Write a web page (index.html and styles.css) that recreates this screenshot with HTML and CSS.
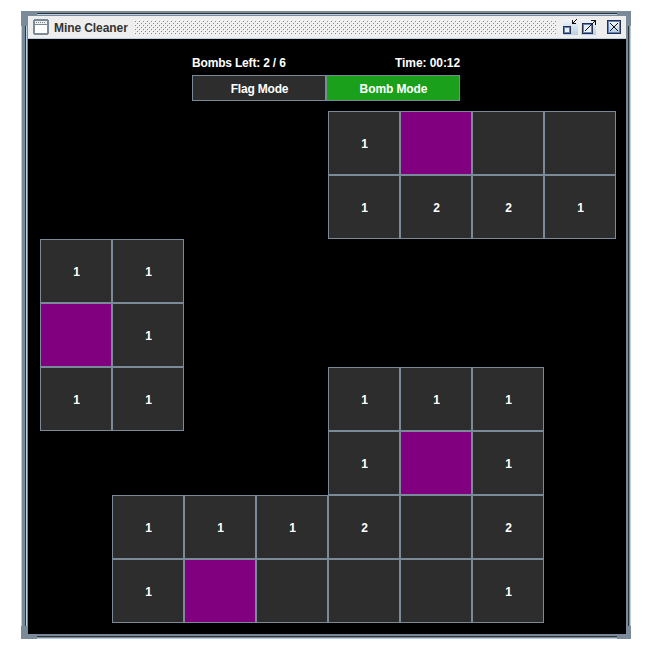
FILE: index.html
```
<!DOCTYPE html>
<html lang="en">
<head>
<meta charset="utf-8">
<title>Mine Cleaner</title>
<link rel="stylesheet" href="styles.css">
</head>
<body>
<div class="window">
  <i class="edge edge-left"></i><i class="edge edge-right"></i><i class="edge edge-bottom"></i>
  <i class="groove top"></i><i class="groove bottom"></i><i class="groove left"></i><i class="groove right"></i>
  <header class="titlebar">
    <svg class="app-icon" width="16" height="16" shape-rendering="crispEdges"><path fill="#7a8a99" d="M1 0h14v1h1v14h-1v1H1v-1H0V1h1z"/><path fill="#fff" d="M2 6h12v8H2z"/><path fill="#eee" d="M2 2h12v3H2z"/><path fill="#7a8a99" d="M3 3h1v1H3zM5 3h1v1H5zM7 3h1v1H7zM9 3h1v1H9zM11 3h1v1h-1z"/></svg>
    <span class="title">Mine Cleaner</span>
    <svg class="bumps" width="422" height="15" shape-rendering="crispEdges"><defs><pattern id="bump" width="4" height="4" patternUnits="userSpaceOnUse"><path fill="#fff" d="M0 0h1v1H0zM2 2h1v1H2z"/><path fill="#7a8a99" d="M1 1h1v1H1zM3 3h1v1H3z"/></pattern></defs><rect width="422" height="15" fill="url(#bump)"/></svg>
    <svg class="buttons" width="60" height="16" shape-rendering="crispEdges">
      <defs><linearGradient id="face" x2="0" y2="1"><stop stop-color="#f2f6fa"/><stop offset="1" stop-color="#b8cfe5"/></linearGradient></defs>
      <path fill="url(#face)" d="M0 0h15v16H0zM18 0h15v16H18z"/>
      <path fill="#26324a" d="M0 7h8v8H0z"/><path fill="#6382bf" d="M1 8h6v6H1z"/><path fill="#e8f0f8" d="M2 9h4v4H2z"/>
      <path fill="#111" d="M9 1h1v3h3v1H9zM10 3h1v1h-1zM11 2h1v1h-1zM12 1h1v1h-1zM13 0h1v1h-1z"/>
      <path fill="#26324a" d="M19 4h11v11H19z"/><path fill="#6382bf" d="M20 5h9v9H20z"/><path fill="#e8f0f8" d="M21 6h7v7h-7z"/>
      <path fill="#111" d="M22 11h1v1h-1zM23 10h1v1h-1zM24 9h1v1h-1zM25 8h1v1h-1zM26 7h1v1h-1zM27 6h1v1h-1zM28 5h1v1h-1zM29 4h1v1h-1zM30 3h1v1h-1zM31 2h1v1h-1zM28 1h5v5h-1V2h-4z"/>
      <path fill="#26324a" d="M44 1h14v14H44z"/><path fill="#6382bf" d="M45 2h12v12H45z"/><path fill="url(#face)" d="M46 3h10v10H46z"/>
      <path stroke="#111" d="M47 4l8 8M55 4l-8 8" stroke-width="1.300"/>
    </svg>
  </header>
  <main class="content">
    <div class="panel">
      <div class="status"><span class="bombs">Bombs Left: 2 / 6</span><span class="time">Time: 00:12</span></div>
      <div class="modes"><button>Flag Mode</button><button class="active">Bomb Mode</button></div>
    </div>
    <div class="board">
      <b></b><b></b><b></b><b></b><b class="cell">1</b><b class="cell mine"></b><b class="cell"></b><b class="cell"></b>
      <b></b><b></b><b></b><b></b><b class="cell">1</b><b class="cell">2</b><b class="cell">2</b><b class="cell">1</b>
      <b class="cell">1</b><b class="cell">1</b><b></b><b></b><b></b><b></b><b></b><b></b>
      <b class="cell mine"></b><b class="cell">1</b><b></b><b></b><b></b><b></b><b></b><b></b>
      <b class="cell">1</b><b class="cell">1</b><b></b><b></b><b class="cell">1</b><b class="cell">1</b><b class="cell">1</b><b></b>
      <b></b><b></b><b></b><b></b><b class="cell">1</b><b class="cell mine"></b><b class="cell">1</b><b></b>
      <b></b><b class="cell">1</b><b class="cell">1</b><b class="cell">1</b><b class="cell">2</b><b class="cell"></b><b class="cell">2</b><b></b>
      <b></b><b class="cell">1</b><b class="cell mine"></b><b class="cell"></b><b class="cell"></b><b class="cell"></b><b class="cell">1</b><b></b>
    </div>
  </main>
</div>
</body>
</html>
```
FILE: styles.css
```
* { box-sizing: border-box; }
body { margin: 0; padding: 11px 0 0 21px; background: #fff; font: bold 12px/16px "Liberation Sans", Arial, sans-serif; }
.window { position: relative; width: 610px; height: 628px; padding: 5px 5px 5px 7px; background: #7a8a99; }
.edge { position: absolute; background: #b8cfe5; }
.edge-left, .edge-right { top: 15px; bottom: 13px; width: 1px; }
.edge-left { left: 0; }
.edge-right { right: 0; }
.edge-bottom { left: 16px; right: 14px; bottom: 0; height: 1px; }
.groove { position: absolute; background: #333; }
.top, .bottom { left: 16px; right: 14px; height: 1px; }
.top { top: 2px; box-shadow: 0 1px #b8cfe5; }
.bottom { bottom: 2px; }
.left, .right { top: 15px; bottom: 13px; width: 1px; }
.left { left: 4px; box-shadow: 1px 0 #b8cfe5; }
.right { right: 2px; }
.titlebar { display: flex; align-items: center; height: 23px; padding: 0 3px 0 5px; background: #eee; border-bottom: 1px solid #b8cfe5; color: #333; }
.titlebar svg { display: block; flex: none; }
.title { width: 80px; margin-left: 5px; padding-top: 1px; letter-spacing: -0.08px; white-space: nowrap; }
.bumps { margin-right: 7px; }
.content { height: 595px; padding: 16px 10px 0 12px; background: #000; color: #fff; }
.panel { width: 268px; margin-left: 152px; }
.status { display: flex; justify-content: space-between; height: 20px; }
.bombs { letter-spacing: -0.18px; }
.time { letter-spacing: -0.08px; }
.modes { display: grid; grid-template-columns: 1fr 1fr; height: 26px; }
.modes button { padding: 2px 0 0 1px; border: 1px solid #7a8a99; background: #2d2d2d; color: #fff; font: inherit; letter-spacing: -0.2px; }
.modes .active { background: #1ba01b; letter-spacing: -0.1px; }
.board { display: grid; grid-template: repeat(8, 64px) / repeat(8, 72px); margin-top: 10px; }
.buttons { margin-left: auto; }
.cell { display: grid; place-items: center; padding: 2px 0 0 1px; border: 1px solid #7a8a99; background: #2d2d2d; }
.mine { background: #800080; }
```
